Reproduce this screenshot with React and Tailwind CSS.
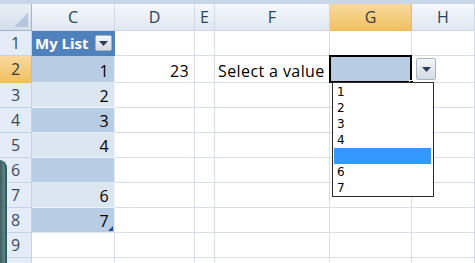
import React from "react";

const cols = [
  { key: "C", w: "w-[83px]" },
  { key: "D", w: "w-[80px]" },
  { key: "E", w: "w-[20px]" },
  { key: "F", w: "w-[115px]" },
  { key: "G", w: "w-[82px]" },
  { key: "H", w: "flex-1" },
];

const rows = [
  { n: 1, h: "h-[25px]" },
  { n: 2, h: "h-[27px]" },
  { n: 3, h: "h-[25px]" },
  { n: 4, h: "h-[25px]" },
  { n: 5, h: "h-[25px]" },
  { n: 6, h: "h-[25px]" },
  { n: 7, h: "h-[25px]" },
  { n: 8, h: "h-[25px]" },
  { n: 9, h: "h-[25px]" },
  { n: 10, h: "h-[25px]" },
];

const cVals = { 2: "1", 3: "2", 4: "3", 5: "4", 6: "", 7: "6", 8: "7" };

function ArrowBtn({ cls }) {
  return (
    <div className={"shrink-0 flex items-center justify-center rounded-[2px] border border-[#a9b4c2] bg-gradient-to-b from-[#f4f6f8] to-[#d5dbe3] " + cls}>
      <svg width="9" height="5" viewBox="0 0 9 5">
        <path d="M0 0 H9 L4.5 5 Z" fill="#2b3e58" />
      </svg>
    </div>
  );
}

const txt = "text-[16px] tracking-[0.4px] leading-none";

function Cell({ col, row }) {
  const base = "h-full border-r border-b border-[#d8dde8] " + col.w;
  if (col.key === "C") {
    if (row.n === 1) {
      return (
        <div className={"h-full w-[83px] border-r border-b border-[#4f81bd] bg-[#4f81bd] flex items-center justify-between pl-[3px] pr-[2px]"}>
          <span className="text-white font-bold text-[15px] whitespace-nowrap leading-none">My List</span>
          <ArrowBtn cls="w-[17px] h-[16px]" />
        </div>
      );
    }
    if (row.n >= 2 && row.n <= 8) {
      const dark = row.n % 2 === 0;
      return (
        <div
          className={
            "relative h-full w-[83px] border-r border-b flex items-end justify-end pr-[5px] pb-[3px] text-black " +
            txt +
            " " +
            (dark ? "bg-[#b8cce4] border-[#e4ebf4]" : "bg-[#dce6f1] border-[#eef3f9]")
          }
        >
          {cVals[row.n]}
          {row.n === 8 && (
            <svg className="absolute right-[1px] bottom-[1px]" width="5" height="5" viewBox="0 0 5 5">
              <path d="M5 0 V5 H0 Z" fill="#1f4e9a" />
            </svg>
          )}
        </div>
      );
    }
  }
  if (col.key === "D" && row.n === 2) {
    return <div className={base + " flex items-end justify-end pr-[5px] pb-[3px] " + txt}>23</div>;
  }
  if (col.key === "F" && row.n === 2) {
    return (
      <div className={base + " flex items-end pl-[3px] pb-[3px] whitespace-nowrap " + txt}>Select a value</div>
    );
  }
  if (col.key === "G" && row.n === 2) {
    return (
      <div className="relative h-full w-[82px] border-r border-b border-[#d8dde8]">
        <div className="absolute left-[-1px] top-[-1px] right-[-1px] bottom-[-1px] border-2 border-black bg-[#b8cce4]" />
        <div className="absolute right-[-3px] bottom-[-3px] w-[5px] h-[5px] bg-black border border-white" />
      </div>
    );
  }
  return <div className={base} />;
}

export default function App() {
  const items = ["1", "2", "3", "4", "", "6", "7"];
  return (
    <div className="relative w-[475px] h-[263px] overflow-hidden bg-white font-['Open_Sans',sans-serif] text-black">
      <div className="h-[4px] bg-[#c9d6e8]" />
      {/* header row */}
      <div className="flex h-[27px]">
        <div className="relative w-[32px] h-full border-r border-b border-[#9eb6ce] bg-gradient-to-b from-[#e9eef5] to-[#d3deec]">
          <svg className="absolute right-[3px] bottom-[3px]" width="14" height="14" viewBox="0 0 14 14">
            <path d="M14 0 V14 H0 Z" fill="#b5c6dc" />
          </svg>
        </div>
        {cols.map((c) => (
          <div
            key={c.key}
            className={
              "h-full border-r border-b flex items-center justify-center text-[16px] " +
              c.w +
              (c.key === "G"
                ? " bg-gradient-to-b from-[#f9d99f] to-[#f1c15f] border-[#f2b84c] text-[#3b3b3b]"
                : " bg-gradient-to-b from-[#f5f8fc] to-[#e0e7f1] border-[#d0d7e5] text-[#27415e]")
            }
          >
            {c.key}
          </div>
        ))}
      </div>
      {rows.map((r) => (
        <div key={r.n} className={"flex " + r.h}>
          <div
            className={
              "w-[32px] h-full border-r border-b flex items-center justify-center text-[16px] " +
              (r.n === 2
                ? "bg-gradient-to-b from-[#f9d99f] to-[#f1c15f] border-[#f2b84c] text-[#3b3b3b]"
                : "bg-[#e4ecf7] border-[#c5d3e6] text-[#3b4a5f]")
            }
          >
            {r.n < 10 ? r.n : ""}
          </div>
          {cols.map((c) => (
            <Cell key={c.key} col={c} row={r} />
          ))}
        </div>
      ))}

      {/* dropdown arrow */}
      <ArrowBtn cls="absolute left-[416px] top-[58px] w-[20px] h-[22px]" />

      {/* dropdown list */}
      <div className="absolute left-[332px] top-[82px] w-[102px] h-[115px] border border-[#2b2b2b] bg-white py-[1px] pl-[1px] pr-[2px] font-['DejaVu_Sans',sans-serif] text-[12px]">
        {items.map((it, i) => (
          <div key={i} className={"h-[16px] leading-[16px] pl-[3px] " + (i === 4 ? "bg-[#3399ff]" : "")}>
            {it}
          </div>
        ))}
      </div>

      {/* left window edge */}
      <div className="absolute left-[-6px] top-[160px] w-[13px] h-[110px] rounded-tr-[8px] bg-gradient-to-r from-[#1e2a2e] to-[#5f8a8c] border-r-[2px] border-[#2f5f63]" />
    </div>
  );
}
